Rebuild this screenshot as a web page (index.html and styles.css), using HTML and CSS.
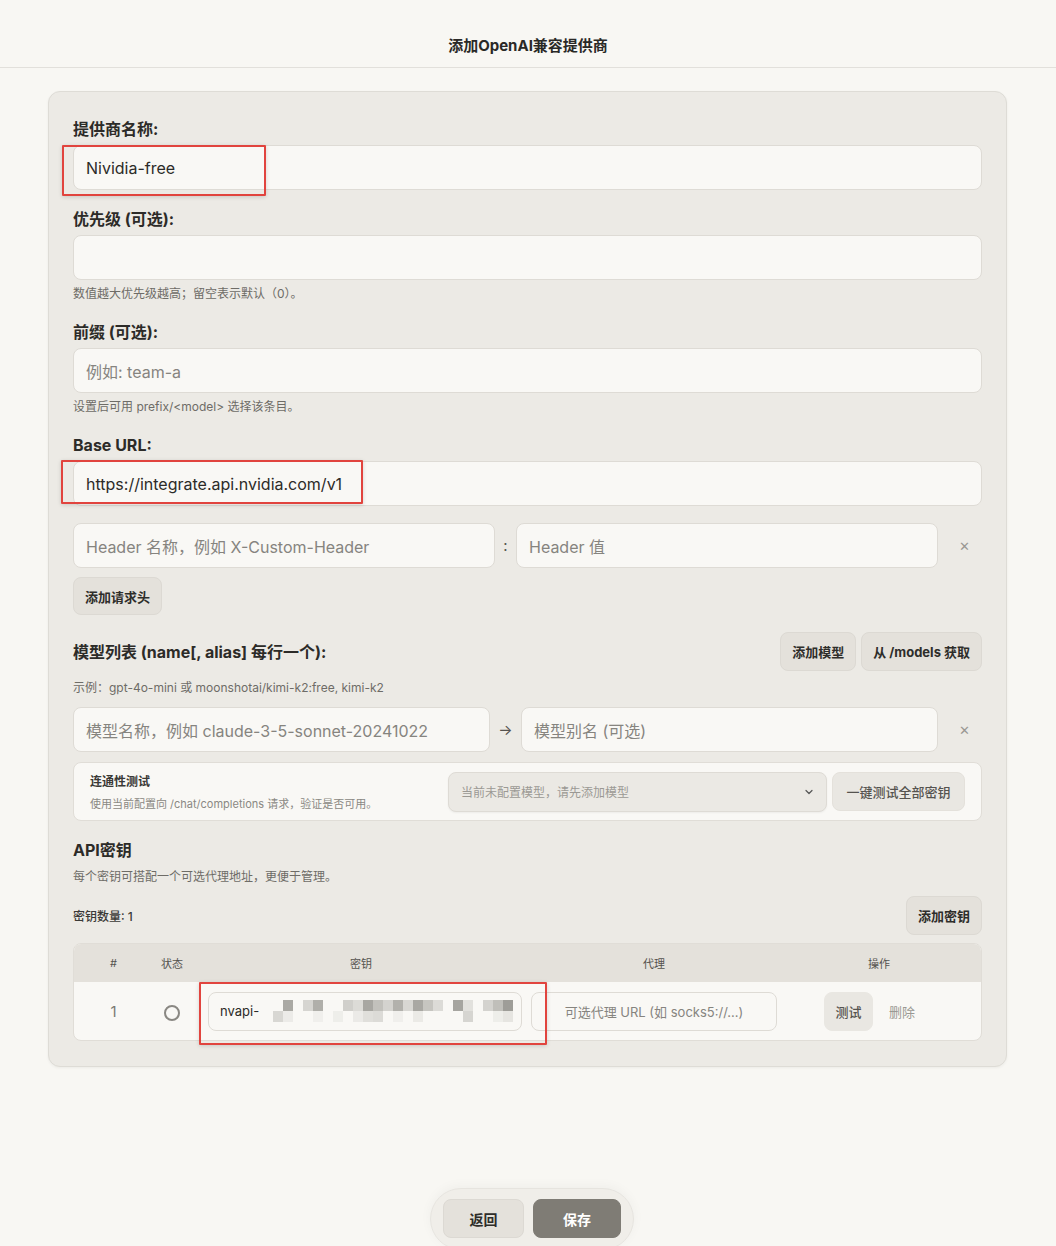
FILE: index.html
```html
<!DOCTYPE html>
<html lang="zh-CN">
	<head>
		<meta charset="UTF-8">
		<title>添加OpenAI兼容提供商</title>
		<link rel="stylesheet" href="styles.css">
	</head>
	<body>
		<header class="pageHeader">
			<h1>添加OpenAI兼容提供商</h1>
		</header>

		<main class="card">
			<!-- provider name -->
			<div class="field">
				<div class="label">提供商名称:</div>
				<div class="input">Nividia-free</div>
			</div>

			<div class="field">
				<div class="label">优先级 (可选):</div>
				<div class="input"></div>
				<div class="hint">数值越大优先级越高；留空表示默认（0）。</div>
			</div>

			<div class="field">
				<div class="label">前缀 (可选):</div>
				<div class="input placeholder">例如: team-a</div>
				<div class="hint">设置后可用 prefix/&lt;model&gt; 选择该条目。</div>
			</div>

			<div class="field">
				<div class="label">Base URL:</div>
				<div class="input">https://integrate.api.nvidia.com/v1</div>
			</div>

			<!-- custom headers -->
			<div class="pairRow headerRow">
				<div class="input placeholder grow">Header 名称，例如 X-Custom-Header</div>
				<span class="sep">:</span>
				<div class="input placeholder grow">Header 值</div>
				<span class="remove">&#x2715;</span>
			</div>
			<button class="btn addHeader">添加请求头</button>

			<!-- models -->
			<div class="modelHead">
				<div class="label">模型列表 (name[, alias] 每行一个):</div>
				<div class="btnGroup">
					<button class="btn">添加模型</button>
					<button class="btn">从 /models 获取</button>
				</div>
			</div>
			<div class="hint modelHint">示例：gpt-4o-mini 或 moonshotai/kimi-k2:free, kimi-k2</div>
			<div class="pairRow modelRow">
				<div class="input placeholder grow">模型名称，例如 claude-3-5-sonnet-20241022</div>
				<span class="sep arrow">&#x2192;</span>
				<div class="input placeholder grow">模型别名 (可选)</div>
				<span class="remove">&#x2715;</span>
			</div>

			<div class="testBox">
				<div class="testText">
					<div class="testTitle">连通性测试</div>
					<div class="testSub">使用当前配置向 /chat/completions 请求，验证是否可用。</div>
				</div>
				<div class="select">
					<span>当前未配置模型，请先添加模型</span>
					<svg width="10" height="10" viewBox="0 0 10 10"><path d="M2 3.5 L5 6.5 L8 3.5" fill="none" stroke="#555" stroke-width="1.2" stroke-linecap="round" stroke-linejoin="round"/></svg>
				</div>
				<button class="btn testAll">一键测试全部密钥</button>
			</div>

			<!-- api keys -->
			<h2 class="sectionTitle">API密钥</h2>
			<div class="sectionSub">每个密钥可搭配一个可选代理地址，更便于管理。</div>
			<div class="countRow">
				<span class="count">密钥数量: 1</span>
				<button class="btn">添加密钥</button>
			</div>

			<div class="keyTable">
				<div class="tRow tHead">
					<div>#</div>
					<div>状态</div>
					<div>密钥</div>
					<div>代理</div>
					<div>操作</div>
				</div>
				<div class="tRow tBody">
					<div class="num">1</div>
					<div><span class="status"></span></div>
					<div class="keyCell">
						<div class="smallInput keyInput">
							<span>nvapi-</span>
							<svg class="mosaic" width="250" height="22" viewBox="0 0 250 22">
								<rect x="10" y="11" width="10" height="11" fill="#d8d7d3"/>
								<rect x="20" y="0" width="10" height="11" fill="#aaa9a4"/>
								<rect x="20" y="11" width="10" height="11" fill="#ecebe8"/>
								<rect x="40" y="0" width="10" height="11" fill="#d6d5d1"/>
								<rect x="50" y="0" width="10" height="11" fill="#b0afaa"/>
								<rect x="50" y="11" width="10" height="11" fill="#f0efec"/>
								<rect x="70" y="11" width="10" height="11" fill="#eeeeea"/>
								<rect x="80" y="0" width="10" height="11" fill="#d0cfcb"/>
								<rect x="90" y="0" width="10" height="11" fill="#dcdbd7"/>
								<rect x="90" y="11" width="10" height="11" fill="#ebeae7"/>
								<rect x="100" y="0" width="10" height="11" fill="#a8a7a2"/>
								<rect x="110" y="0" width="10" height="11" fill="#c2c1bc"/>
								<rect x="100" y="11" width="10" height="11" fill="#e0dfdb"/>
								<rect x="110" y="11" width="10" height="11" fill="#dcdbd7"/>
								<rect x="120" y="0" width="10" height="11" fill="#d4d3cf"/>
								<rect x="130" y="0" width="10" height="11" fill="#b2b1ac"/>
								<rect x="130" y="11" width="10" height="11" fill="#f0efec"/>
								<rect x="140" y="0" width="10" height="11" fill="#d8d7d3"/>
								<rect x="150" y="0" width="10" height="11" fill="#a9a8a3"/>
								<rect x="150" y="11" width="10" height="11" fill="#ebeae6"/>
								<rect x="160" y="0" width="10" height="11" fill="#c6c5c0"/>
								<rect x="170" y="0" width="10" height="11" fill="#dcdbd7"/>
								<rect x="190" y="0" width="10" height="11" fill="#a6a5a0"/>
								<rect x="200" y="0" width="10" height="11" fill="#e2e1dd"/>
								<rect x="200" y="11" width="10" height="11" fill="#d6d5d1"/>
								<rect x="220" y="0" width="10" height="11" fill="#d4d3cf"/>
								<rect x="230" y="0" width="10" height="11" fill="#c0bfba"/>
								<rect x="240" y="0" width="10" height="11" fill="#9e9d98"/>
								<rect x="230" y="11" width="10" height="11" fill="#eeeeea"/>
								<rect x="240" y="11" width="10" height="11" fill="#e6e5e1"/>
							</svg>
						</div>
					</div>
					<div class="proxyCell">
						<div class="smallInput placeholder">可选代理 URL (如 socks5://...)</div>
					</div>
					<div class="actions">
						<button class="btn small">测试</button>
						<span class="delete">删除</span>
					</div>
				</div>
			</div>

			<!-- red annotation frames -->
			<div class="mark markName"></div>
			<div class="mark markUrl"></div>
			<div class="mark markKey"></div>
		</main>

		<div class="footerBar">
			<button class="btn footBtn">返回</button>
			<button class="btn footBtn save">保存</button>
		</div>
	</body>
</html>
```

FILE: styles.css
```css
html
{
	background: #F8F7F3;
}

body
{
	margin: 0;
	padding: 0 0 180px;
	font-family: "Inter", "Noto Sans CJK SC", sans-serif;
	color: #2E2D2A;
	background: #F8F7F3;
}

.pageHeader
{
	height: 68px;
	border-bottom: 1px solid #E2E0DB;
	box-sizing: border-box;
	display: flex;
	align-items: flex-end;
	justify-content: center;
	padding-bottom: 10px;
}

h1
{
	margin: 0;
	font-size: 15px;
	line-height: 22px;
	font-weight: 700;
	color: #2A2927;
}

.card
{
	position: relative;
	margin: 23px 48px 0;
	width: 959px;
	box-sizing: border-box;
	padding: 26px 24px 25px;
	background: #ECEAE5;
	border: 1px solid #DEDCD6;
	border-radius: 12px;
	box-shadow: 0 1px 3px rgba(0, 0, 0, 0.05);
}

.field + .field
{
	margin-top: 18px;
}

.label
{
	font-size: 16px;
	font-weight: 700;
	line-height: 22px;
	margin-bottom: 5px;
	color: #2C2B28;
}

.input
{
	height: 45px;
	box-sizing: border-box;
	padding: 0 12px;
	display: flex;
	align-items: center;
	background: #F9F8F5;
	border: 1px solid #DEDBD5;
	border-radius: 8px;
	font-size: 16px;
	color: #2C2B28;
	white-space: nowrap;
	overflow: hidden;
}

.placeholder
{
	color: #86847F;
}

.hint
{
	margin-top: 5px;
	font-size: 12px;
	line-height: 18px;
	color: #6E6C67;
}

.pairRow
{
	display: flex;
	align-items: center;
}

.grow
{
	flex: 1 1 0;
}

.sep
{
	width: 21px;
	text-align: center;
	font-size: 15px;
	color: #55534F;
}

.arrow
{
	width: 31px;
	font-size: 15px;
}

.remove
{
	width: 44px;
	box-sizing: border-box;
	padding-right: 12px;
	text-align: right;
	font-size: 13px;
	color: #9A9893;
}

.headerRow
{
	margin-top: 17px;
}

.headerRow .grow
{
	flex: 0 0 422px;
}

.btn
{
	font-family: inherit;
	font-size: 13px;
	font-weight: 700;
	color: #2E2D2A;
	background: #E4E1DB;
	border: 1px solid #DCD9D3;
	border-radius: 8px;
	height: 39px;
	padding: 0 11px;
	cursor: pointer;
}

.addHeader
{
	margin-top: 9px;
	height: 38px;
}

.modelHead
{
	margin-top: 17px;
	display: flex;
	align-items: center;
	justify-content: space-between;
}

.modelHead .label
{
	margin: 0;
}

.btnGroup
{
	display: flex;
	gap: 5px;
}

.btnGroup .btn
{
	height: 39px;
}

.modelHint
{
	margin-top: 8px;
}

.modelRow
{
	margin-top: 10px;
}

.modelRow .grow:first-child
{
	flex: 0 0 417px;
}

.testBox
{
	margin-top: 10px;
	height: 59px;
	box-sizing: border-box;
	padding: 0 16px 0 16px;
	display: flex;
	align-items: center;
	background: #F9F8F5;
	border: 1px solid #E0DDD7;
	border-radius: 8px;
}

.testText
{
	flex: 1 1 0;
}

.testTitle
{
	font-size: 12px;
	font-weight: 700;
	line-height: 18px;
	color: #3A3936;
}

.testSub
{
	margin-top: 6px;
	font-size: 11px;
	line-height: 14px;
	color: #8A8883;
}

.select
{
	width: 379px;
	height: 40px;
	box-sizing: border-box;
	padding: 0 12px;
	display: flex;
	align-items: center;
	justify-content: space-between;
	background: #EBE9E4;
	border: 1px solid #DEDBD5;
	border-radius: 8px;
	box-shadow: 0 1px 2px rgba(0, 0, 0, 0.05);
	font-size: 12px;
	color: #9B9994;
}

.testAll
{
	margin-left: 5px;
	width: 133px;
	padding: 0;
	font-weight: 500;
	color: #55534F;
	background: #E9E7E2;
	border-color: #E4E1DB;
	font-size: 13px;
}

.sectionTitle
{
	margin: 18px 0 0;
	font-size: 16px;
	font-weight: 700;
	line-height: 22px;
	color: #2C2B28;
}

.sectionSub
{
	margin-top: 7px;
	font-size: 12px;
	line-height: 18px;
	color: #6E6C67;
}

.countRow
{
	margin-top: 10px;
	display: flex;
	align-items: center;
	justify-content: space-between;
}

.count
{
	font-size: 12px;
	font-weight: 500;
	color: #3A3936;
}

.keyTable
{
	margin-top: 8px;
	border: 1px solid #E0DDD7;
	border-radius: 8px;
	overflow: hidden;
	background: #F9F8F5;
}

.tRow
{
	display: grid;
	grid-template-columns: 79px 38px 340px 246px 1fr;
	align-items: center;
}

.tHead
{
	height: 38px;
	background: #E4E1DB;
	font-size: 11px;
	color: #55534F;
	text-align: center;
}

.tBody
{
	height: 58px;
	text-align: center;
}

.num
{
	font-size: 15px;
	color: #7A7873;
}

.status
{
	display: inline-block;
	width: 12px;
	height: 12px;
	border: 2px solid #8A8883;
	border-radius: 50%;
	vertical-align: middle;
}

.keyCell
{
	padding: 0 9px 0 17px;
}

.smallInput
{
	height: 39px;
	box-sizing: border-box;
	padding: 0 11px;
	display: flex;
	align-items: center;
	background: #F9F8F5;
	border: 1px solid #DEDBD5;
	border-radius: 8px;
	font-size: 13px;
	white-space: nowrap;
	overflow: hidden;
}

.keyInput
{
	color: #2C2B28;
}

.mosaic
{
	margin-left: 4px;
	flex: none;
}

.proxyCell .smallInput
{
	justify-content: center;
}

.actions
{
	display: flex;
	align-items: center;
	padding-left: 47px;
	gap: 16px;
}

.btn.small
{
	height: 39px;
	width: 49px;
	padding: 0;
	font-weight: 500;
	color: #55534F;
	background: #E9E7E2;
	border-color: #E9E7E2;
}

.delete
{
	font-size: 13px;
	color: #9A9893;
}

.mark
{
	position: absolute;
	border: 2px solid #E1443E;
	border-radius: 1px;
	box-shadow: 0 1px 4px rgba(0, 0, 0, 0.15);
	pointer-events: none;
}

.markName
{
	left: 13px;
	top: 53px;
	width: 200px;
	height: 47px;
}

.markUrl
{
	left: 12px;
	top: 368px;
	width: 298px;
	height: 40px;
}

.markKey
{
	left: 150px;
	top: 890px;
	width: 344px;
	height: 59px;
}

.footerBar
{
	position: fixed;
	left: 430px;
	bottom: -4px;
	width: 204px;
	height: 62px;
	box-sizing: border-box;
	padding: 10px 12px 0;
	display: flex;
	gap: 9px;
	align-items: flex-start;
	background: #F0EEE9;
	border: 1px solid #E6E4DF;
	border-radius: 31px;
	box-shadow: 0 -2px 12px rgba(0, 0, 0, 0.04);
}

.footBtn
{
	height: 39px;
	width: 81px;
	padding: 0;
	font-size: 14px;
}

.save
{
	width: 88px;
	color: #FFFFFF;
	background: #7F7C75;
	border-color: #7F7C75;
}
```
